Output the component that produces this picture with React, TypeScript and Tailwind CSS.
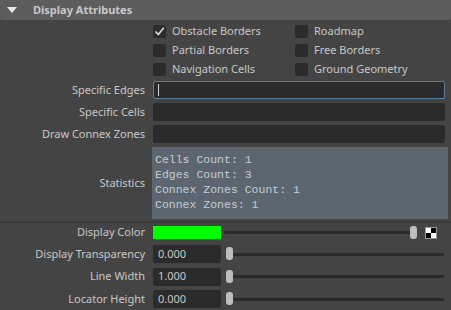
import React from "react";

const font = { fontFamily: '"Noto Sans", "DejaVu Sans", sans-serif' };

function Check({ on, label }: { on?: boolean; label: string }) {
  return (
    <div className="flex items-center h-[19px] w-[142px]">
      <div className="w-[13px] h-[13px] rounded-[2px] bg-[#2b2b2b] flex items-center justify-center">
        {on && (
          <svg width="11" height="11" viewBox="0 0 11 11">
            <path d="M1.5 5.5 L4.3 8.5 L9.8 1.8" stroke="#e0e0e0" strokeWidth="1.6" fill="none" />
          </svg>
        )}
      </div>
      <span className="ml-[6px] text-[11px] text-[#c8c8c8]">{label}</span>
    </div>
  );
}

function Label({ children }: { children: React.ReactNode }) {
  return <div className="w-[145px] shrink-0 text-right text-[11px] text-[#c8c8c8]">{children}</div>;
}

function SliderRow({ label, value }: { label: string; value: string }) {
  return (
    <div className="flex items-center h-[18px]">
      <Label>{label}</Label>
      <div className="ml-[8px] w-[68px] h-[18px] rounded-[2px] bg-[#2b2b2b] text-[11px] text-[#c8c8c8] flex items-center pl-[5px]">
        {value}
      </div>
      <div className="relative flex-1 h-[18px] ml-[5px] mr-[7px] flex items-center">
        <div className="w-full h-[3px] bg-[#2b2b2b] rounded-full" />
        <div className="absolute left-0 top-[2px] w-[7px] h-[13px] rounded-[3px] bg-[#bdbdbd]" />
      </div>
    </div>
  );
}

export default function App() {
  return (
    <div className="w-[451px] h-[310px] bg-[#444444] overflow-hidden" style={font}>
      {/* Section header */}
      <div className="h-[20px] bg-[#5d5d5d] rounded-b-[2px] flex items-center">
        <svg width="10" height="6" viewBox="0 0 10 6" className="ml-[7px]">
          <path d="M0 0 L10 0 L5 6 Z" fill="#e8e8e8" />
        </svg>
        <span className="ml-[16px] text-[11px] font-bold text-[#c8c8c8]">Display Attributes</span>
      </div>

      {/* Checkboxes */}
      <div className="pl-[153px] pt-[2px] flex flex-col">
        <div className="flex"><Check on label="Obstacle Borders" /><Check label="Roadmap" /></div>
        <div className="flex"><Check label="Partial Borders" /><Check label="Free Borders" /></div>
        <div className="flex"><Check label="Navigation Cells" /><Check label="Ground Geometry" /></div>
      </div>

      {/* Text fields */}
      <div className="flex flex-col gap-[4px] mt-[2px]">
        <div className="flex items-center gap-[8px]">
          <Label>Specific Edges</Label>
          <div className="w-[292px] h-[18px] rounded-[2px] bg-[#2b2b2b] border border-[#5b7d9c] flex items-center pl-[4px]">
            <div className="w-px h-[12px] bg-[#d0d0d0]" />
          </div>
        </div>
        <div className="flex items-center gap-[8px]">
          <Label>Specific Cells</Label>
          <div className="w-[292px] h-[18px] rounded-[2px] bg-[#2b2b2b]" />
        </div>
        <div className="flex items-center gap-[8px]">
          <Label>Draw Connex Zones</Label>
          <div className="w-[292px] h-[18px] rounded-[2px] bg-[#2b2b2b]" />
        </div>
        <div className="flex items-center gap-[7px]">
          <Label>Statistics</Label>
          <div
            className="w-[296px] h-[72px] bg-[#5c6670] text-[11.5px] leading-[15px] text-[#c5ccd3] pl-[3px] pt-[5px]"
            style={{ fontFamily: '"Liberation Mono", "Courier New", monospace' }}
          >
            <div>Cells Count: 1</div>
            <div>Edges Count: 3</div>
            <div>Connex Zones Count: 1</div>
            <div>Connex Zones: 1</div>
          </div>
        </div>
      </div>

      {/* Separator */}
      <div className="mt-[2px] h-[2px] bg-[#3a3a3a]" />

      {/* Colour and sliders */}
      <div className="flex items-center h-[13px] mt-[3px]">
        <Label>Display Color</Label>
        <div className="ml-[8px] w-[68px] h-[13px] bg-[#00ff00]" />
        <div className="relative w-[193px] ml-[3px] h-[13px] flex items-center">
          <div className="w-full h-[3px] bg-[#2b2b2b] rounded-full" />
          <div className="absolute right-0 top-0 w-[7px] h-[13px] rounded-[3px] bg-[#bdbdbd]" />
        </div>
        <div className="ml-[8px] w-[12px] h-[12px] border border-[#9a9a9a] grid grid-cols-2 grid-rows-2">
          <div className="bg-white" /><div className="bg-black" />
          <div className="bg-black" /><div className="bg-white" />
        </div>
      </div>
      <div className="flex flex-col gap-[4.5px] mt-[6px]">
        <SliderRow label="Display Transparency" value="0.000" />
        <SliderRow label="Line Width" value="1.000" />
        <SliderRow label="Locator Height" value="0.000" />
      </div>
    </div>
  );
}
